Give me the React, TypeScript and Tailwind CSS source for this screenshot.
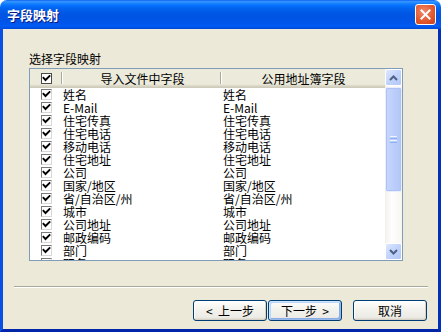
import React from "react";

const rows: [string, string][] = [
  ["姓名", "姓名"],
  ["E-Mail", "E-Mail"],
  ["住宅传真", "住宅传真"],
  ["住宅电话", "住宅电话"],
  ["移动电话", "移动电话"],
  ["住宅地址", "住宅地址"],
  ["公司", "公司"],
  ["国家/地区", "国家/地区"],
  ["省/自治区/州", "省/自治区/州"],
  ["城市", "城市"],
  ["公司地址", "公司地址"],
  ["邮政编码", "邮政编码"],
  ["部门", "部门"],
  ["职务", "职务"],
];

function Check({ header }: { header?: boolean }) {
  return (
    <div
      className={
        header
          ? "w-[11px] h-[11px] border border-[#4a4a4a] bg-white flex items-center justify-center"
          : "w-[11px] h-[11px] border-l border-t border-[#7a7a7a] border-r border-b border-r-[#d8d8d8] border-b-[#d8d8d8] bg-white flex items-center justify-center"
      }
    >
      <svg width="9" height="9" viewBox="0 0 9 9">
        <polyline points="1.5,3.8 3.5,6 7.5,2" fill="none" stroke="#000" strokeWidth="1.9" strokeLinecap="square" />
      </svg>
    </div>
  );
}

function Btn({ children, def }: { children: React.ReactNode; def?: boolean }) {
  return (
    <div
      className={
        "w-[74px] h-[21px] rounded-[3px] border border-[#003c74] flex items-center justify-center text-[12px] leading-none text-black whitespace-pre bg-[linear-gradient(180deg,#ffffff,#f4f3ee_40%,#ecebe6_86%,#d6d0c5)] " +
        (def
          ? "shadow-[inset_1px_1px_#cee7ff,inset_-1px_-1px_#98b8ea,inset_2px_2px_#bcd4f6,inset_-2px_-2px_#89ade4]"
          : "shadow-[inset_-1px_-1px_#d6d0c5,inset_1px_1px_#ffffff]")
      }
    >
      {children}
    </div>
  );
}

export default function App() {
  return (
    <div
      className="w-[441px] h-[332px] flex flex-col overflow-hidden"
      style={{ fontFamily: '"Noto Sans CJK SC", "Liberation Sans", sans-serif' }}
    >
      {/* Title bar */}
      <div className="h-[29px] shrink-0 rounded-t-[7px] bg-[linear-gradient(180deg,#0058ee_0%,#3a93ff_4%,#288eff_8%,#127dff_14%,#036ffc_20%,#0262ee_30%,#0057e5_45%,#0054e3_60%,#0055eb_80%,#005bf5_90%,#0049d8_100%)] flex items-center pl-[7px] pr-[5px] justify-between">
        <span className="text-white font-bold text-[13px] leading-none [text-shadow:1px_1px_#0a1883]">字段映射</span>
        <div className="w-[21px] h-[21px] rounded-[3px] border border-white bg-[radial-gradient(circle_at_40%_35%,#f08a6a,#e35a2f_55%,#c8401a)] flex items-center justify-center">
          <svg width="11" height="11" viewBox="0 0 11 11">
            <path d="M1.5 1.5 L9.5 9.5 M9.5 1.5 L1.5 9.5" stroke="#fff" strokeWidth="2" strokeLinecap="square" />
          </svg>
        </div>
      </div>
      {/* Frame */}
      <div className="flex-1 flex flex-col border-l-[3px] border-r-[3px] border-b-[3px] border-l-[#0850e5] border-r-[#0030b8] border-b-[#0025a8] bg-[#ece9d8]">
        <div className="pl-[26px] pt-[22px]">
          <div className="h-[17px] text-[12px] leading-[16px] text-black">选择字段映射</div>
          <div className="w-[374px] h-[193px] border border-[#7f9db9] bg-white flex overflow-hidden">
            <div className="w-[355px] flex flex-col overflow-hidden">
              {/* header */}
              <div className="h-[19px] shrink-0 flex bg-[linear-gradient(180deg,#ebeadb_0%,#ebeadb_80%,#e2decd_85%,#d6d2c2_92%,#cbc7b8_100%)] text-[12px] text-black">
                <div className="w-[33px] shrink-0 flex items-start pt-[4px] pl-[11px] relative">
                  <Check header />
                  <div className="absolute right-0 top-[3px] bottom-[4px] w-[2px] border-l border-[#aca899] border-r border-r-white" />
                </div>
                <div className="w-[159px] shrink-0 flex items-center justify-center relative leading-none">
                  导入文件中字段
                  <div className="absolute right-0 top-[3px] bottom-[4px] w-[2px] border-l border-[#aca899] border-r border-r-white" />
                </div>
                <div className="w-[163px] shrink-0 flex items-center justify-center leading-none">公用地址簿字段</div>
              </div>
              {/* rows */}
              <div className="flex flex-col">
                {rows.map(([a, b], i) => (
                  <div key={i} className="h-[13px] shrink-0 flex text-[12px] leading-[13px] text-black">
                    <div className="w-[33px] shrink-0 pl-[11px] pt-[1px]">
                      <Check />
                    </div>
                    <div className="w-[160px] shrink-0 whitespace-nowrap">{a}</div>
                    <div className="flex-1 whitespace-nowrap">{b}</div>
                  </div>
                ))}
              </div>
            </div>
            {/* scrollbar */}
            <div className="w-[17px] shrink-0 flex flex-col bg-[linear-gradient(90deg,#f3f1ec,#fefefe_40%,#f7f6f3)]">
              <div className="h-[17px] shrink-0 rounded-[2px] border border-white bg-[linear-gradient(135deg,#dfe8fd,#c1d3fb_50%,#b4c8f6)] flex items-center justify-center">
                <svg width="9" height="6" viewBox="0 0 9 6">
                  <polyline points="1,5 4.5,1.5 8,5" fill="none" stroke="#4d6185" strokeWidth="2" />
                </svg>
              </div>
              <div className="h-[105px] shrink-0 mt-[1px] rounded-[2px] border border-[#e8eefd] bg-[linear-gradient(90deg,#c8d6fb,#bccefa_50%,#b2c6f6)] shadow-[inset_0_0_0_1px_#aec3f3] flex items-center justify-center">
                <div className="flex flex-col gap-[1px]">
                  <div className="w-[7px] h-[1px] bg-[#eef3fe]" />
                  <div className="w-[7px] h-[1px] bg-[#8cb0f8]" />
                  <div className="w-[7px] h-[1px] bg-[#eef3fe]" />
                  <div className="w-[7px] h-[1px] bg-[#8cb0f8]" />
                </div>
              </div>
              <div className="flex-1" />
              <div className="h-[17px] shrink-0 rounded-[2px] border border-white bg-[linear-gradient(135deg,#dfe8fd,#c1d3fb_50%,#b4c8f6)] flex items-center justify-center">
                <svg width="9" height="6" viewBox="0 0 9 6">
                  <polyline points="1,1 4.5,4.5 8,1" fill="none" stroke="#4d6185" strokeWidth="2" />
                </svg>
              </div>
            </div>
          </div>
        </div>
        <div className="ml-[11px] mt-[25px] w-[414px] h-[2px] border-t border-[#aca899] border-b border-b-white" />
        <div className="flex mt-[12px] pl-[190px]">
          <Btn>{"<  上一步"}</Btn>
          <div className="ml-[1px]">
            <Btn def>{"下一步  >"}</Btn>
          </div>
          <div className="ml-[11px]">
            <Btn>取消</Btn>
          </div>
        </div>
      </div>
    </div>
  );
}
